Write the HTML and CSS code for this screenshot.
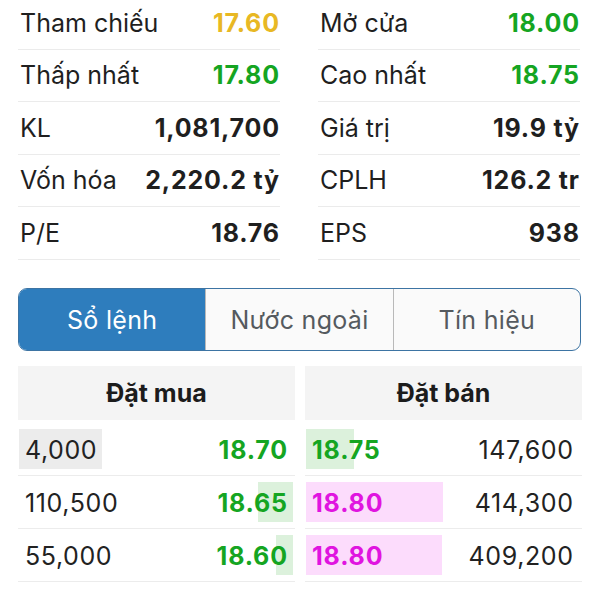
FILE: index.html
```html
<!DOCTYPE html>
<html lang="vi">
<head>
<meta charset="utf-8">
<link rel="stylesheet" href="styles.css">
</head>
<body>
<div class="stats">
  <div class="col">
    <div class="row"><span class="lbl">Tham chiếu</span><span class="val ref">17.60</span></div>
    <div class="row"><span class="lbl">Thấp nhất</span><span class="val up">17.80</span></div>
    <div class="row"><span class="lbl">KL</span><span class="val">1,081,700</span></div>
    <div class="row"><span class="lbl">Vốn hóa</span><span class="val">2,220.2 tỷ</span></div>
    <div class="row"><span class="lbl">P/E</span><span class="val">18.76</span></div>
  </div>
  <div class="col">
    <div class="row"><span class="lbl">Mở cửa</span><span class="val up">18.00</span></div>
    <div class="row"><span class="lbl">Cao nhất</span><span class="val up">18.75</span></div>
    <div class="row"><span class="lbl">Giá trị</span><span class="val">19.9 tỷ</span></div>
    <div class="row"><span class="lbl">CPLH</span><span class="val">126.2 tr</span></div>
    <div class="row"><span class="lbl">EPS</span><span class="val">938</span></div>
  </div>
</div>

<div class="tabs">
  <div class="tab active">Sổ lệnh</div>
  <div class="tab">Nước ngoài</div>
  <div class="tab">Tín hiệu</div>
</div>

<div class="book">
  <div class="side buy">
    <div class="head">Đặt mua</div>
    <div class="orow">
      <span class="bar gray left" style="width:83px"></span>
      <span class="qty">4,000</span><span class="price up">18.70</span>
    </div>
    <div class="orow">
      <span class="bar green right" style="width:35px"></span>
      <span class="qty">110,500</span><span class="price up">18.65</span>
    </div>
    <div class="orow">
      <span class="bar green right" style="width:17px"></span>
      <span class="qty">55,000</span><span class="price up">18.60</span>
    </div>
  </div>
  <div class="side sell">
    <div class="head">Đặt bán</div>
    <div class="orow">
      <span class="bar green left" style="width:48px"></span>
      <span class="price up">18.75</span><span class="qty">147,600</span>
    </div>
    <div class="orow">
      <span class="bar pink left" style="width:137px"></span>
      <span class="price ceil">18.80</span><span class="qty">414,300</span>
    </div>
    <div class="orow">
      <span class="bar pink left" style="width:136px"></span>
      <span class="price ceil">18.80</span><span class="qty">409,200</span>
    </div>
  </div>
</div>
</body>
</html>
```

FILE: styles.css
```css
* { box-sizing: border-box; }
html, body {
  margin: 0;
  padding: 0;
  background: #ffffff;
}
body {
  font-family: Inter, "Noto Sans", "Liberation Sans", sans-serif;
  color: #1c1c1c;
  font-size: 25px;
  overflow: hidden;
}

.stats {
  display: grid;
  grid-template-columns: 1fr 1fr;
  column-gap: 38px;
  padding: 0 20px 0 18px;
  margin-top: -3px;
}
.row {
  display: flex;
  justify-content: space-between;
  align-items: center;
  height: 52.5px;
  border-bottom: 1px solid #ebebeb;
  padding: 0 1px 0 2px;
}
.lbl { font-weight: 400; color: #1f1f1f; }
.val { font-weight: 700; color: #1f1f1f; letter-spacing: 0.8px; margin-right: -0.8px; }
.ref { color: #e8b824; }
.up { color: #15a522; }
.ceil { color: #e014e0; }

.tabs {
  display: flex;
  margin: 28px 19px 0 18px;
  height: 63px;
  border: 1.5px solid #3d74a3;
  border-radius: 9px;
  overflow: hidden;
  background: #fafafa;
}
.tab {
  flex: 1;
  display: flex;
  align-items: center;
  justify-content: center;
  color: #555a5f;
  border-left: 1px solid #b9b9b9;
  letter-spacing: 0.3px;
  padding-top: 2px;
}
.tab:first-child { border-left: none; }
.tab.active {
  background: #2e7dbd;
  color: #ffffff;
}

.book {
  display: grid;
  grid-template-columns: 1fr 1fr;
  column-gap: 10px;
  padding: 0 18px;
  margin-top: 15px;
}
.head {
  height: 54px;
  background: #f4f4f4;
  display: flex;
  align-items: center;
  justify-content: center;
  font-weight: 700;
  margin-bottom: 3px;
}
.orow {
  position: relative;
  display: flex;
  justify-content: space-between;
  align-items: center;
  height: 53px;
  border-bottom: 1px solid #ececec;
  padding: 2px 8px 0 7px;
}
.sell .orow { padding: 2px 9px 0 7px; }
.qty, .price { position: relative; z-index: 1; }
.qty { font-weight: 400; color: #222; letter-spacing: 0.6px; }
.price { font-weight: 700; letter-spacing: 0.8px; }
.buy .price { margin-right: -0.8px; }
.sell .qty { margin-right: -0.6px; }
.bar {
  position: absolute;
  top: 6px;
  bottom: 6px;
}
.bar.left { left: 1px; }
.bar.right { right: 2px; }
.bar.gray { background: #ececec; }
.bar.green { background: #dcf1dc; }
.bar.pink { background: #fcdcfc; }
```
